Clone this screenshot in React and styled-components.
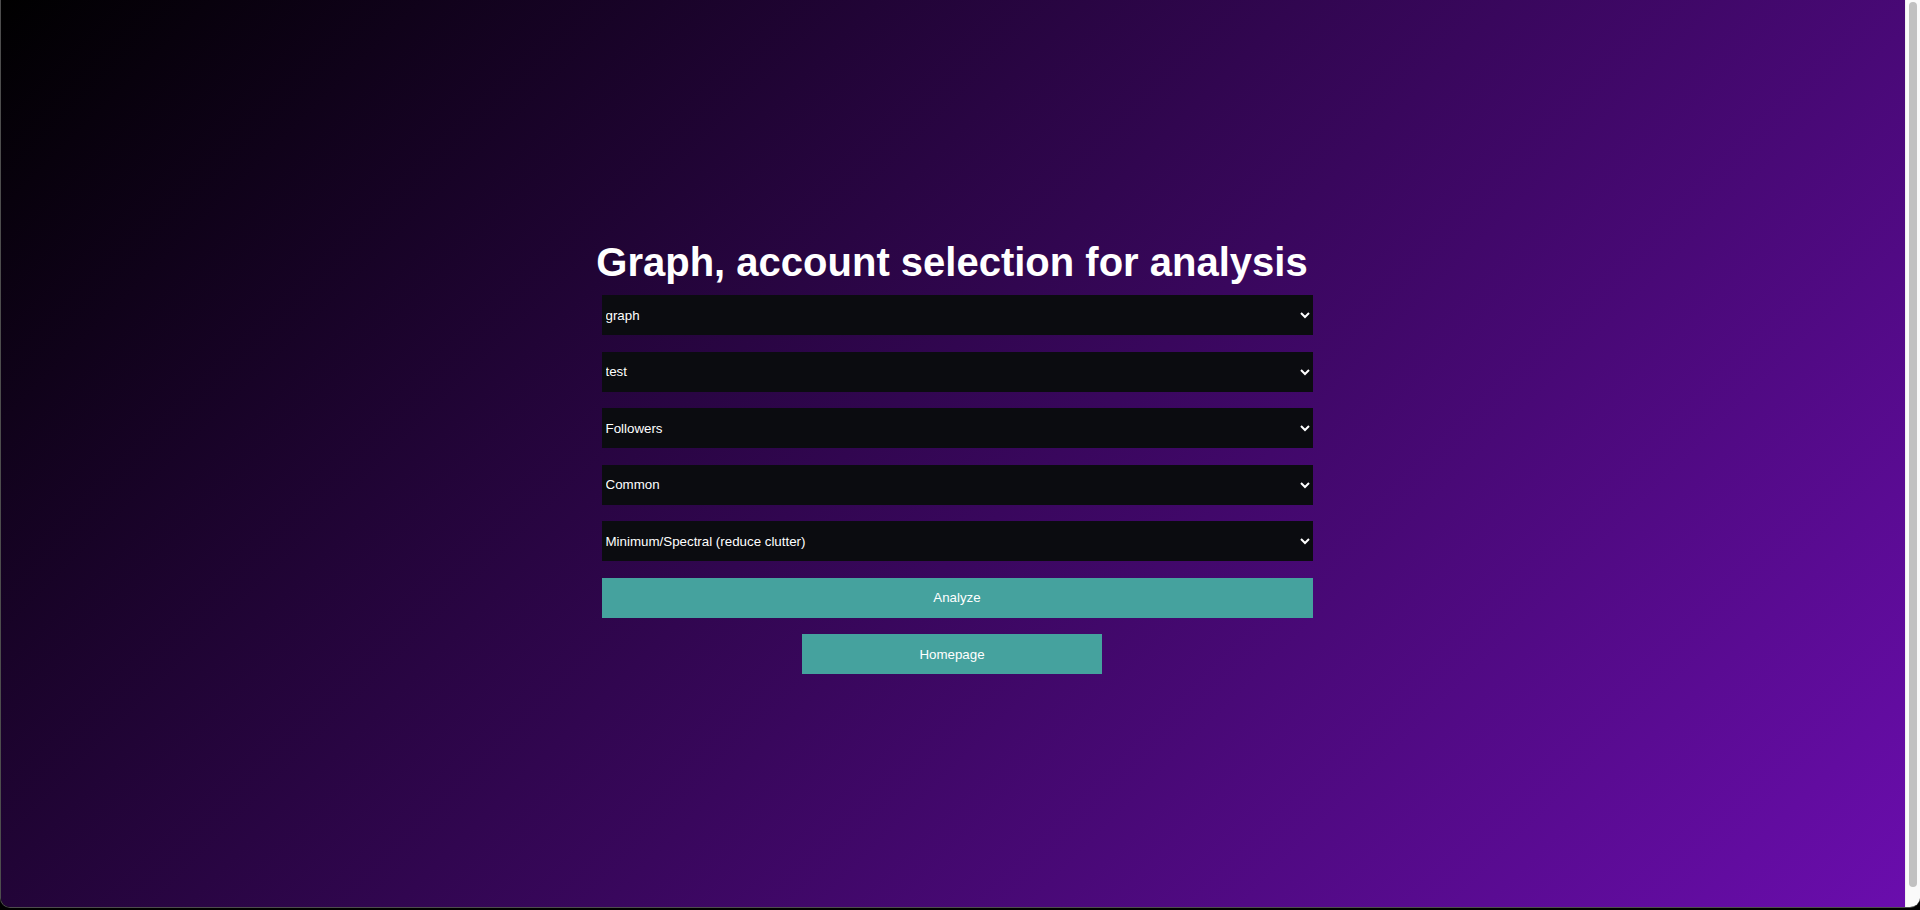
import React, { useState } from "react";
import styled, { createGlobalStyle } from "styled-components";

const GlobalStyle = createGlobalStyle`
  html, body {
    margin: 0;
    padding: 0;
    height: 100%;
    overflow: hidden;
  }
  body {
    background: #000000;
    font-family: "Liberation Sans", Arial, sans-serif;
    color: #ffffff;
  }
`;

const Shell = styled.div`
  box-sizing: border-box;
  height: 908px;
  display: flex;
  border-left: 1px solid rgba(255, 255, 255, 0.3);
  border-bottom: 1px solid rgba(255, 255, 255, 0.3);
  border-radius: 0 0 10px 10px;
  overflow: hidden;
`;

const Main = styled.main`
  flex: 1;
  min-width: 0;
  padding: 6px 2px 0 0;
  background: linear-gradient(135deg, #000000 0%, #6a0dad 100%);
  display: flex;
  flex-direction: column;
  align-items: center;
  justify-content: center;
`;

const ScrollTrack = styled.div`
  width: 15px;
  flex: none;
  box-sizing: border-box;
  background: #fafafa;
  border-left: 1px solid #f0f0f0;
  padding: 2px 3px 20px 3px;
  display: flex;
`;

const ScrollThumb = styled.div`
  flex: 1;
  border-radius: 4px;
  background: #c1c1c1;
`;

const Panel = styled.div`
  display: flex;
  flex-direction: column;
  align-items: center;
  gap: 16.5px;
`;

const Title = styled.h1`
  margin: 0 0 -6.5px 0;
  font-family: "Liberation Sans", Arial, sans-serif;
  font-size: 40px;
  font-weight: 700;
  line-height: 46px;
  color: #ffffff;
  text-align: center;
`;

const Form = styled.form`
  width: 711px;
  margin-left: 10px;
  display: flex;
  flex-direction: column;
  gap: 16.5px;
`;

const Select = styled.select`
  width: 100%;
  height: 40px;
  padding: 0;
  border: none;
  border-radius: 0;
  background: #0b0c10;
  color: #ffffff;
  font-family: "Liberation Sans", Arial, sans-serif;
  font-size: 13.333px;
  color-scheme: dark;
  outline: none;
`;

const Button = styled.button`
  width: ${(p) => (p.$wide ? "100%" : "300px")};
  height: 40px;
  border: none;
  border-radius: 0;
  background: #45a29e;
  color: #ffffff;
  font-family: "Liberation Sans", Arial, sans-serif;
  font-size: 13.333px;
  cursor: pointer;
`;

const fields = [
  { name: "graph", options: ["graph"] },
  { name: "account", options: ["test"] },
  { name: "relation", options: ["Followers", "Following"] },
  { name: "mode", options: ["Common", "All"] },
  { name: "layout", options: ["Minimum/Spectral (reduce clutter)", "Force directed"] },
];

export default function App() {
  const [values, setValues] = useState(
    Object.fromEntries(fields.map((f) => [f.name, f.options[0]]))
  );
  return (
    <>
      <GlobalStyle />
      <Shell>
        <Main>
          <Panel>
            <Title>Graph, account selection for analysis</Title>
            <Form onSubmit={(e) => e.preventDefault()}>
              {fields.map((f) => (
                <Select
                  key={f.name}
                  value={values[f.name]}
                  onChange={(e) => setValues({ ...values, [f.name]: e.target.value })}
                >
                  {f.options.map((o) => (
                    <option key={o} value={o}>
                      {o}
                    </option>
                  ))}
                </Select>
              ))}
              <Button $wide type="submit">Analyze</Button>
            </Form>
            <Button type="button">Homepage</Button>
          </Panel>
        </Main>
        <ScrollTrack>
          <ScrollThumb />
        </ScrollTrack>
      </Shell>
    </>
  );
}
